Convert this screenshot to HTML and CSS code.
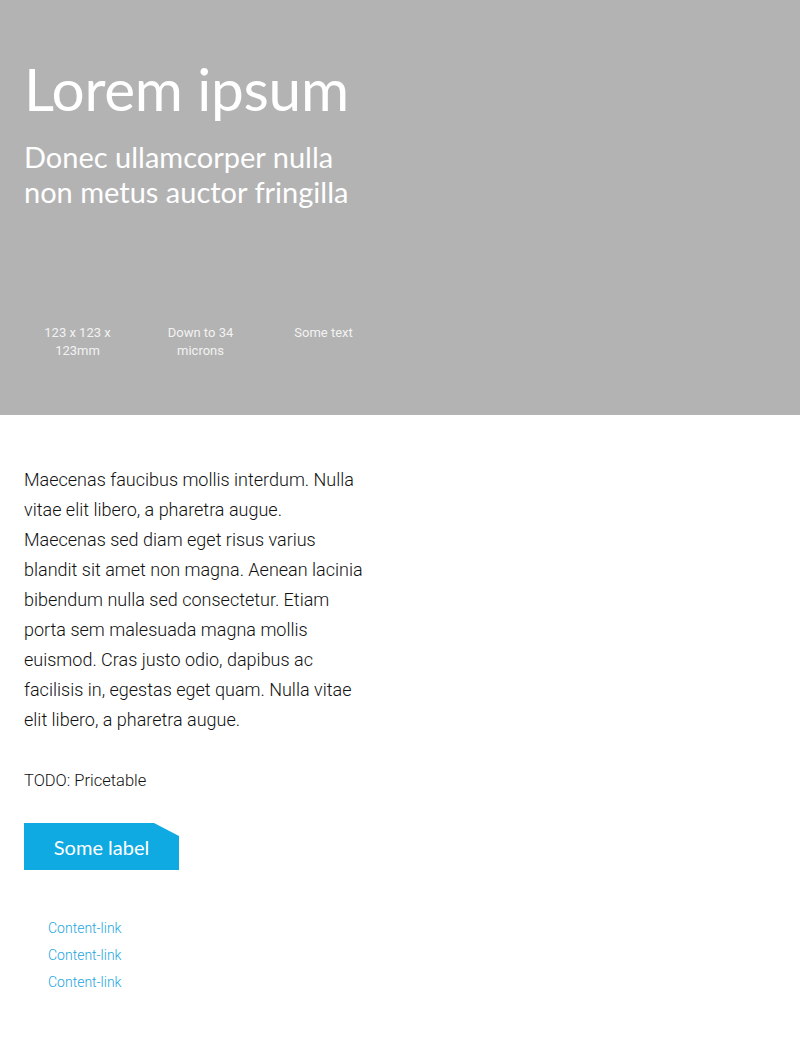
FILE: index.html
```html
<!DOCTYPE html>
<html>
<head>
<meta charset="utf-8">
<link rel="stylesheet" href="styles.css">
</head>
<body>
<header class="hero">
  <h1 class="hero-title">Lorem ipsum</h1>
  <p class="hero-sub">Donec ullamcorper nulla<br>non metus auctor fringilla</p>
  <ul class="stats">
    <li>123 x 123 x<br>123mm</li>
    <li>Down to 34<br>microns</li>
    <li>Some text</li>
  </ul>
</header>
<main class="content">
  <p class="intro">Maecenas faucibus mollis interdum. Nulla vitae elit libero, a pharetra augue. Maecenas sed diam eget risus varius blandit sit amet non magna. Aenean lacinia bibendum nulla sed consectetur. Etiam porta sem malesuada magna mollis euismod. Cras justo odio, dapibus ac facilisis in, egestas eget quam. Nulla vitae elit libero, a pharetra augue.</p>
  <p class="todo">TODO: Pricetable</p>
  <a class="label-btn" href="#">Some label</a>
  <ul class="links">
    <li><a href="#">Content-link</a></li>
    <li><a href="#">Content-link</a></li>
    <li><a href="#">Content-link</a></li>
  </ul>
</main>
</body>
</html>
```
FILE: styles.css
```css
* { box-sizing: border-box; }
body {
  margin: 0;
  font-family: Roboto, "Liberation Sans", sans-serif;
  color: #1a1a1a;
  background: #fff;
}
.hero {
  background: #b3b3b3;
  color: #fff;
  height: 415px;
  padding: 52px 24px 0;
}
.hero-title {
  margin: 0;
  font-family: Lato, sans-serif;
  font-weight: 400;
  font-size: 58.5px;
  line-height: 72px;
  letter-spacing: -0.3px;
}
.hero-sub {
  margin: 15px 0 0;
  font-family: Lato, sans-serif;
  font-size: 29px;
  line-height: 35px;
}
.stats {
  list-style: none;
  margin: 115px 0 0 -8px;
  padding: 0;
  display: flex;
  font-size: 13px;
  line-height: 18px;
  color: #f2f2f2;
}
.stats li {
  width: 123px;
  text-align: center;
}
.content {
  padding: 0 24px 40px;
}
.intro {
  margin: 50px 0 0;
  width: 340px;
  font-size: 18px;
  line-height: 30px;
  font-weight: 300;
  color: #111;
}
.todo {
  margin: 36px 0 0;
  font-size: 16.5px;
  line-height: 20px;
  font-weight: 300;
  color: #111;
}
.label-btn {
  display: flex;
  align-items: center;
  justify-content: center;
  margin-top: 32px;
  width: 155px;
  height: 47px;
  background: #0faae2;
  color: #fff;
  text-decoration: none;
  font-family: Lato, sans-serif;
  font-size: 20px;
  clip-path: polygon(0 0, 130px 0, 155px 13px, 155px 100%, 0 100%);
}
.links {
  list-style: none;
  margin: 45px 0 0;
  padding: 0 0 0 24px;
  font-size: 14px;
  line-height: 27px;
}
.links a {
  color: #1ba6e0;
  text-decoration: none;
  font-weight: 300;
}
```
